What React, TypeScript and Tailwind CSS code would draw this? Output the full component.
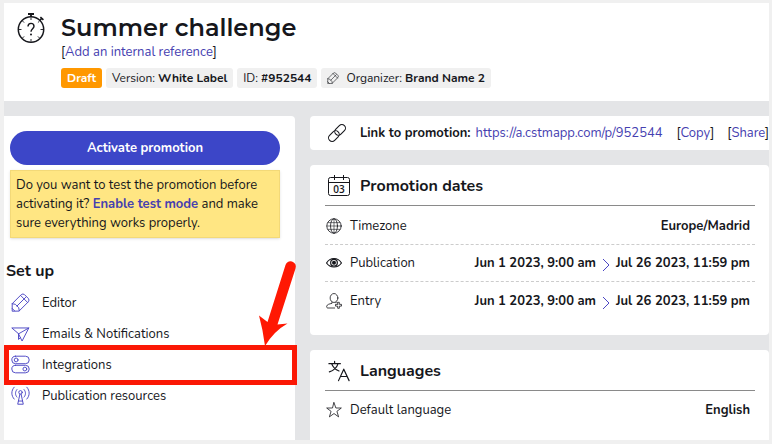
import type { ReactNode, SVGProps } from "react";

const Icon = ({ children, ...props }: SVGProps<SVGSVGElement>) => (
  <svg
    viewBox="0 0 24 24"
    fill="none"
    stroke="currentColor"
    strokeWidth="1.2"
    strokeLinecap="round"
    strokeLinejoin="round"
    aria-hidden="true"
    {...props}
  >
    {children}
  </svg>
);

const StopwatchIcon = () => (
  <svg viewBox="0 0 28 30" className="h-[30px] w-7 shrink-0" fill="none" stroke="currentColor" aria-hidden="true">
    <circle cx="14" cy="16.5" r="12.7" strokeWidth="1.5" />
    <path d="M11 1h6M14 1.5v2.5" strokeWidth="1.8" />
    <path d="M22.8 7.5l1.8-2M23.4 4.2l3 2.7" strokeWidth="1.6" />
    <path
      d="M14 4.500v2.500M14 26v2.500M2 16.500h2.500M23.500 16.500h2.500M5.500 8l1.600 1.600M5.500 25l1.600-1.600M22.500 25l-1.600-1.600M22.500 8l-1.600 1.600"
      strokeWidth="0.9"
    />
    <path d="M11 13.600c0-2 1.200-3.200 3-3.200s3 1.200 3 2.900c0 2.300-3 2.500-3 5.400" strokeWidth="1.4" />
    <circle cx="14" cy="21.500" r="1" fill="currentColor" stroke="none" />
  </svg>
);

const PencilIcon = ({ className }: { className: string }) => (
  <Icon className={className}>
    <path d="M1.500 22.500v-9L13 2q2-1.500 4 0l5 5q1.500 2 0 4L10.500 22.500z" />
    <path d="M1.500 13.500l4 .8 4.200 4.200.8 4M7.500 16.500L18.500 5.500M12 3l9 9M1.500 19.500l3 3" />
  </Icon>
);

const PlaneIcon = ({ className }: { className: string }) => (
  <Icon className={className}>
    <path d="M1.500 5h21L14 21.500 9.500 12.500zM9.500 12.500L22.500 5M9.500 12.500v7l2.700-2.400" />
  </Icon>
);

const TogglesIcon = ({ className }: { className: string }) => (
  <Icon className={className}>
    <rect x="1" y="1.500" width="22" height="9.500" rx="4.750" />
    <rect x="1" y="13" width="22" height="9.500" rx="4.750" />
    <circle cx="6.500" cy="6.250" r="2.400" />
    <circle cx="17.500" cy="17.750" r="2.400" />
  </Icon>
);

const AntennaIcon = ({ className }: { className: string }) => (
  <Icon className={className}>
    <path d="M4 1.500c-4 4.500-4 10.500 0 15M20 1.500c4 4.500 4 10.500 0 15M7.500 4.500c-2.500 3-2.500 6.500 0 9.500M16.500 4.500c2.500 3 2.500 6.500 0 9.500" />
    <circle cx="12" cy="8" r="2.200" />
    <path d="M11.200 10.500L8.500 23h7l-2.700-12.500M9.500 19h5" />
  </Icon>
);

const LinkIcon = () => (
  <Icon className="size-5 shrink-0" strokeWidth="1.300">
    <rect x="8.500" y="4" width="14.500" height="8.600" rx="4.300" transform="rotate(-45 15.750 8.300)" />
    <rect x="1" y="11.400" width="14.500" height="8.600" rx="4.300" transform="rotate(-45 8.250 15.700)" />
  </Icon>
);

const CalendarIcon = () => (
  <svg viewBox="0 0 22 22" className="size-[22px] shrink-0" fill="none" stroke="currentColor" aria-hidden="true">
    <rect x="0.500" y="2.500" width="21" height="18" rx="2" />
    <path d="M1 7.500h20M6.500 0v5M15.500 0v5" />
    <text x="11" y="18" textAnchor="middle" stroke="none" fill="currentColor" className="font-['Open_Sans',sans-serif] text-[10px] font-semibold">
      03
    </text>
  </svg>
);

const TranslateIcon = () => (
  <Icon className="size-[22px] shrink-0" strokeWidth="1.300">
    <path d="M1 4h12.500M7.200 1.500V4M11 4c-1.500 4.500-4.500 7.500-9.500 9M4 4c1.500 4 4.500 6.500 8 8" />
    <path d="M11.500 22.500L17.200 10l5.800 12.500M13.500 18h7.500" />
  </Icon>
);

const GlobeIcon = () => (
  <Icon className="size-4 shrink-0">
    <circle cx="12" cy="12" r="10.800" />
    <ellipse cx="12" cy="12" rx="5.200" ry="10.800" />
    <path d="M12 1.200v21.600M1.200 12h21.600M3 7h18M3 17h18" strokeWidth="0.900" />
  </Icon>
);

const EyeIcon = () => (
  <Icon className="size-4 shrink-0" strokeWidth="1.800">
    <path d="M0.800 12c5.500-9 16.900-9 22.400 0-5.500 8-16.900 8-22.400 0z" />
    <circle cx="12" cy="11.500" r="5" />
    <circle cx="12" cy="11.500" r="3" fill="currentColor" stroke="none" />
  </Icon>
);

const UserPlusIcon = () => (
  <Icon className="size-4 shrink-0">
    <ellipse cx="12" cy="7.500" rx="5.800" ry="6.700" />
    <path d="M9 13.500v2c-4 1-7.500 1.500-8 4.500 0 2 .5 2.500 2 2.500h10M15 13.500v1" />
    <path d="M17.500 14h2.500v3h3.200v2.700H20v3.200h-2.500v-3.200h-3.200V17h3.200z" />
  </Icon>
);

const StarIcon = () => (
  <Icon className="size-4 shrink-0">
    <path d="M12 1l2.800 8H23l-6.600 5 2.500 8.300L12 17.300l-6.900 5L7.600 14 1 9h8.200z" />
  </Icon>
);

const ChevronIcon = () => (
  <svg
    viewBox="0 0 8 14"
    className="mx-[6px] mt-1 h-[14px] w-2 shrink-0 text-[#4b46c4]"
    fill="none"
    stroke="currentColor"
    aria-hidden="true"
  >
    <path d="M1 1l6 6-6 6" />
  </svg>
);

const Tag = ({ children }: { children: ReactNode }) => (
  <li className="flex h-5 items-center rounded-[3px] bg-[#f0f0f0] px-[6px] whitespace-pre">
    {children}
  </li>
);

const BracketLink = ({ children }: { children: string }) => (
  <span className="whitespace-nowrap">
    [
    <a href="#" className="text-[#4540b0]">
      {children}
    </a>
    ]
  </span>
);

const menu = [
  { label: "Editor", icon: PencilIcon },
  { label: "Emails & Notifications", icon: PlaneIcon },
  { label: "Integrations", icon: TogglesIcon, highlighted: true },
  { label: "Publication resources", icon: AntennaIcon },
];

// Red frame with an arrow pointing at the menu entry
const Highlight = () => (
  <>
    <span className="pointer-events-none absolute -top-1 -right-[2px] -bottom-[5px] left-0 border-[5px] border-[#fb1805]" />
    <svg
      viewBox="0 0 40 86"
      className="pointer-events-none absolute -top-[89px] -right-[2px] h-[86px] w-10"
      fill="#ff1803"
      aria-hidden="true"
    >
      <path d="M28.500 5Q30.500 0.500 35 1.500q5 2 3.500 7L20.500 64.500l10-1Q17 71 8 86 6 70 2 55.500l8.500 6.500z" />
    </svg>
  </>
);

const CardHeading = ({ icon, children }: { icon: ReactNode; children: string }) => (
  <div className="flex h-10 items-center gap-[10px] border-b border-[#8a8a8a] pl-[3px]">
    {icon}
    <h2 className="text-base font-bold">{children}</h2>
  </div>
);

const Row = ({ icon, label, children }: { icon: ReactNode; label: string; children: ReactNode }) => (
  <div className="flex h-[37px] items-center gap-2 pr-[5px] pl-[1px]">
    {icon}
    <dt>{label}</dt>
    <dd className="ml-auto flex items-center font-bold whitespace-nowrap">{children}</dd>
  </div>
);

const DateRange = () => (
  <>
    Jun 1 2023, 9:00 am
    <ChevronIcon />
    Jul 26 2023, 11:59 pm
  </>
);

export default function App() {
  return (
    <div className="flex min-h-screen flex-col bg-[#f0f0f0] pt-[3px] pr-[3px] pb-1 pl-1 font-['Nunito','Open_Sans',sans-serif] text-[13px] leading-[18px] text-[#16171c]">
      <header className="flex gap-4 bg-white pt-[10px] pb-[13px] pl-[13px]">
        <StopwatchIcon />
        <div>
          <h1 className="font-['Montserrat','Inter',sans-serif] text-2xl leading-[30px] font-semibold">
            Summer challenge
          </h1>
          <BracketLink>Add an internal reference</BracketLink>
          <ul className="mt-[7px] flex gap-1 text-xs">
            <li className="flex h-5 items-center rounded-[3px] bg-[#ff9800] px-[6px] font-bold text-white">Draft</li>
            <Tag>
              Version: <b>White Label</b>
            </Tag>
            <Tag>
              ID: <b>#952544</b>
            </Tag>
            <Tag>
              <PencilIcon className="mr-[7px] size-3" />
              Organizer: <b>Brand Name 2</b>
            </Tag>
          </ul>
        </div>
      </header>

      <div className="flex flex-1 gap-[15px] bg-[#e4e5e7] pt-[15px]">
        <aside className="w-[291px] shrink-0 rounded-tr bg-white pt-[15px]">
          <div className="pr-[15px] pl-[6px]">
            <button type="button" className="h-[34px] w-full rounded-full bg-[#3c46c8] font-bold text-white">
              Activate promotion
            </button>
            <p className="mt-[5px] border border-[#f3d978] bg-[#ffe683] px-[5px] pt-[5px] pb-1 leading-[19px] shadow-sm">
              Do you want to test the promotion before activating it?{" "}
              <a href="#" className="font-bold text-[#4540b0]">
                Enable test mode
              </a>{" "}
              and make sure everything works properly.
            </p>
          </div>
          <h2 className="mt-[23px] pl-[2px] text-base leading-5 font-bold">Set up</h2>
          <nav className="mt-[6px]">
            <ul>
              {menu.map(({ label, icon: MenuIcon, highlighted }) => (
                <li key={label} className="relative">
                  <a href="#" className="flex h-[31px] items-center gap-3 pl-[7px]">
                    <MenuIcon className="size-[19px] shrink-0 text-[#4b46c4]" />
                    {label}
                  </a>
                  {highlighted && <Highlight />}
                </li>
              ))}
            </ul>
          </nav>
        </aside>

        <main className="flex min-w-0 flex-1 flex-col gap-[15px]">
          <section className="flex h-[34px] items-center overflow-hidden rounded-l bg-white pl-[17px] whitespace-nowrap">
            <LinkIcon />
            <b className="ml-[13px]">Link to promotion:</b>
            <a href="#" className="ml-[5px] text-[#4540b0]">
              https://a.cstmapp.com/p/952544
            </a>
            <span className="ml-[14px] flex gap-[13px]">
              <BracketLink>Copy</BracketLink>
              <BracketLink>Share</BracketLink>
            </span>
          </section>

          <section className="rounded bg-white pt-[1px] pr-[14px] pb-4 pl-[15px]">
            <CardHeading icon={<CalendarIcon />}>Promotion dates</CardHeading>
            <dl className="divide-y divide-dashed divide-[#cccccc] pt-[2px]">
              <Row icon={<GlobeIcon />} label="Timezone">
                Europe/Madrid
              </Row>
              <Row icon={<EyeIcon />} label="Publication">
                <DateRange />
              </Row>
              <Row icon={<UserPlusIcon />} label="Entry">
                <DateRange />
              </Row>
            </dl>
          </section>

          <section className="flex-1 rounded-t bg-white pt-[1px] pr-[14px] pl-[15px]">
            <CardHeading icon={<TranslateIcon />}>Languages</CardHeading>
            <dl>
              <Row icon={<StarIcon />} label="Default language">
                English
              </Row>
            </dl>
          </section>
        </main>
      </div>
    </div>
  );
}
